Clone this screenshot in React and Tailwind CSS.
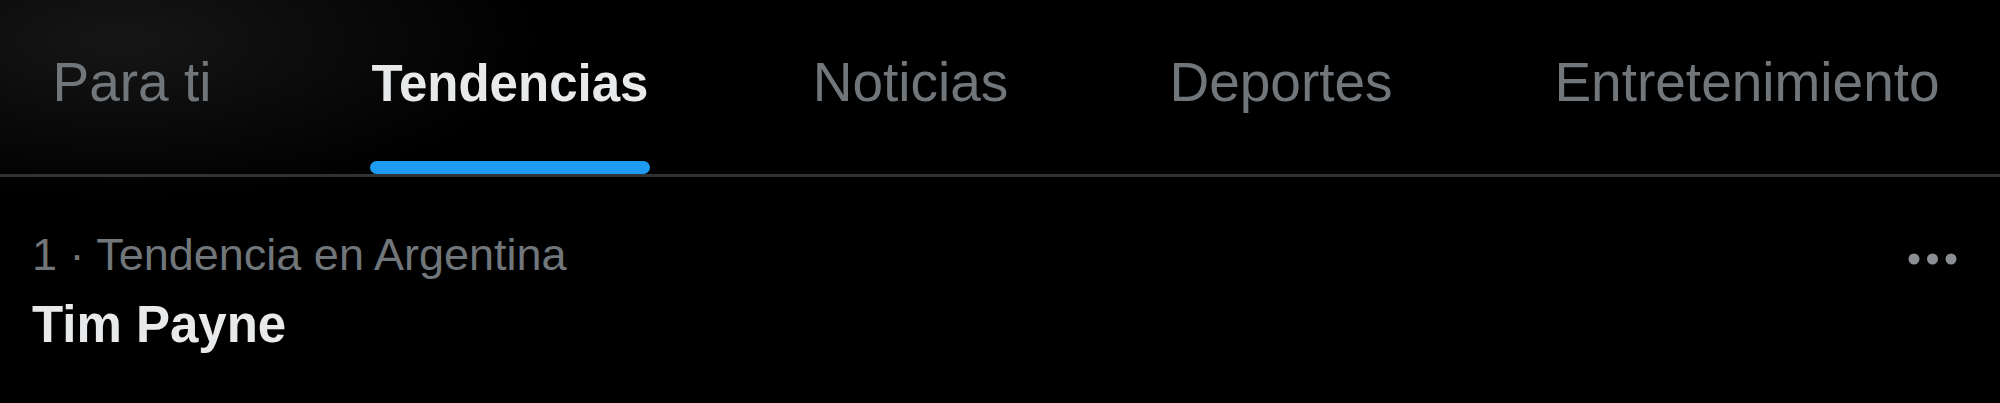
import React from "react";

const tabs = [
  { label: "Para ti", w: "w-[152px]" },
  { label: "Tendencias", w: "w-[280px]", active: true },
  { label: "Noticias", w: "w-[197px]" },
  { label: "Deportes", w: "w-[220px]" },
  { label: "Entretenimiento", w: "w-[388px]" },
];

export default function App() {
  return (
    <div
      className="w-[2000px] h-[403px] overflow-hidden bg-black bg-[radial-gradient(ellipse_420px_160px_at_120px_40px,#161616,#000)]"
      style={{ fontFamily: '"Liberation Sans", Arial, sans-serif' }}
    >
      <div className="flex h-[177px] border-b-[3px] border-[#2f3336] pl-[56px] gap-[162px]">
        {tabs.map((t) => (
          <div key={t.label} className={`${t.w} flex flex-col items-center shrink-0`}>
            <div
              className={
                t.active
                  ? "pt-[58px] text-[51px] leading-none font-bold text-[#e7e9ea] whitespace-nowrap"
                  : "pt-[55px] text-[55px] leading-none text-[#71767b] whitespace-nowrap"
              }
            >
              {t.label}
            </div>
            {t.active && <div className="mt-auto h-[13px] w-full rounded-full bg-[#1d9bf0]" />}
          </div>
        ))}
      </div>
      <div className="flex justify-between items-start pl-[32px] pr-[43px] pt-[55px]">
        <div className="flex flex-col">
          <div className="text-[45px] leading-none text-[#71767b] whitespace-nowrap">
            1 · Tendencia en Argentina
          </div>
          <div className="mt-[22px] text-[51px] leading-none font-bold text-[#e7e9ea] whitespace-nowrap">
            Tim Payne
          </div>
        </div>
        <svg className="mt-[21px]" width="49" height="12" viewBox="0 0 49 12">
          <circle cx="6" cy="6" r="5.5" fill="#8b8f93" />
          <circle cx="24.5" cy="6" r="5.5" fill="#8b8f93" />
          <circle cx="43" cy="6" r="5.5" fill="#8b8f93" />
        </svg>
      </div>
    </div>
  );
}
